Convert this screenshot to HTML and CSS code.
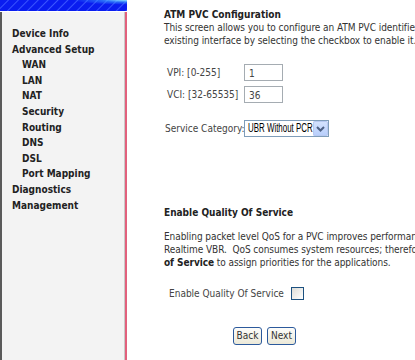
FILE: index.html
```html
<!DOCTYPE html>
<html lang="en">
<head>
    <meta charset="UTF-8">
    <title>ATM PVC Configuration</title>
    <link rel="stylesheet" href="styles.css">
</head>
<body>
<div class="page">

    <!-- Left menu frame -->
    <div class="side">
        <div class="banner"></div>
        <ul class="menu">
            <li>Device Info</li>
            <li>Advanced Setup</li>
            <li class="sub">WAN</li>
            <li class="sub">LAN</li>
            <li class="sub">NAT</li>
            <li class="sub">Security</li>
            <li class="sub">Routing</li>
            <li class="sub">DNS</li>
            <li class="sub">DSL</li>
            <li class="sub">Port Mapping</li>
            <li>Diagnostics</li>
            <li>Management</li>
        </ul>
    </div>

    <!-- Main frame -->
    <div class="main">
        <div class="title">ATM PVC Configuration</div>
        <div class="text">
            <div class="line">This screen allows you to configure an ATM PVC identifier (PVI and VCI) and select a service category. Otherwise choose an</div>
            <div class="line">existing interface by selecting the checkbox to enable it.</div>
        </div>

        <div class="field first">
            <span class="label">VPI: [0-255]</span>
            <span class="input">1</span>
        </div>
        <div class="field">
            <span class="label">VCI: [32-65535]</span>
            <span class="input">36</span>
        </div>

        <div class="field cat">
            <span class="label">Service Category:</span>
            <span class="select">
                <span class="value"><span class="squeeze">UBR Without PCR</span></span>
                <span class="arrow">
                    <svg width="15" height="15" viewBox="0 0 15 15">
                        <path d="M4 6 L7.5 9.5 L11 6" fill="none" stroke="#4d6185" stroke-width="2"/>
                    </svg>
                </span>
            </span>
        </div>

        <div class="title qos">Enable Quality Of Service</div>
        <div class="text">
            <div class="line">Enabling packet level QoS for a PVC improves performance for selected classes of applications.  QoS cannot be set for CBR and</div>
            <div class="line">Realtime VBR.&nbsp; QoS consumes system resources; therefore the number of PVCs will be reduced. Use <b>Advanced Setup/Quality</b></div>
            <div class="line"><b>of Service</b> to assign priorities for the applications.</div>
        </div>

        <div class="check-row">
            <span>Enable Quality Of Service</span>
            <span class="checkbox"></span>
        </div>

        <div class="buttons">
            <span class="btn">Back</span>
            <span class="btn">Next</span>
        </div>
    </div>

</div>
</body>
</html>
```

FILE: styles.css
```css
body {
    margin: 0;
    font-family: "DejaVu Sans Condensed", "DejaVu Sans", sans-serif;
    font-stretch: condensed;
    font-size: 10px;
    color: #333;
    background-color: #fff;
    overflow: hidden;
}

.page {
    display: flex;
    height: 360px;
}

/* Left menu */
.side {
    width: 122px;
    flex: none;
    background-color: #f3f3f3;
    border-left: 2px solid #5a5a5a;
    border-right: 1px solid #c8c8c8;
    box-shadow: 2px 0 0 #e2607c;
}

.banner {
    height: 11px;
    margin-left: -2px;
    margin-right: -3px;
    border-bottom: 1px solid #fff;
    background:
        radial-gradient(ellipse at 100% 0%, #8fe6ff 0%, rgba(60, 160, 255, 0.6) 14%, rgba(0, 0, 255, 0) 30%),
        repeating-linear-gradient(135deg, #0a1df0 0px, #0a1df0 5px, #3a55ff 6px, #0a1df0 7px);
}

.menu {
    list-style: none;
    margin: 0;
    padding: 14px 0 0 10px;
    font-weight: bold;
    color: #222;
}

.menu li {
    line-height: 15.6px;
    white-space: nowrap;
}

.menu .sub {
    padding-left: 10px;
}

/* Main area */
.main {
    flex: 1;
    min-width: 0;
    overflow: hidden;
    padding: 8px 0 0 39px;
}

.title {
    font-weight: bold;
    line-height: 13px;
    color: #222;
}

.text .line {
    line-height: 13px;
    white-space: nowrap;
    letter-spacing: -0.06px;
}

.text b {
    color: #222;
}

.field {
    display: flex;
    align-items: center;
    height: 16px;
    margin-top: 6px;
    padding-left: 3px;
    color: #444;
}

.field.first {
    margin-top: 17px;
}

.field.cat {
    margin-top: 18px;
    padding-left: 1px;
}

.label {
    width: 77px;
    flex: none;
    white-space: nowrap;
}

.field.cat .label {
    width: 79px;
}

.input {
    box-sizing: border-box;
    width: 39px;
    height: 17px;
    border: 1px solid #a5acb2;
    background-color: #fff;
    padding: 2px 0 0 4px;
    line-height: 13px;
}

.select {
    box-sizing: border-box;
    display: flex;
    align-items: center;
    width: 85px;
    height: 17px;
    border: 1px solid #7f9db9;
    background-color: #fff;
}

.select .value {
    flex: 1;
    min-width: 0;
    overflow: hidden;
    padding-left: 3px;
    white-space: nowrap;
}

.squeeze {
    display: inline-block;
    font-family: "Liberation Sans", Arial, sans-serif;
    font-size: 12px;
    color: #000;
    transform: scaleX(0.66);
    transform-origin: left center;
}

.select .arrow {
    display: block;
    flex: none;
    width: 15px;
    height: 15px;
    border-radius: 2px;
    background: linear-gradient(#d6e4fe, #b6cdfb);
    box-shadow: inset 0 0 0 1px #b7c9f2;
}

.select svg {
    display: block;
}

.title.qos {
    margin-top: 70px;
}

.title.qos + .text {
    margin-top: 11px;
}

.check-row {
    display: flex;
    align-items: center;
    margin-top: 18px;
    padding-left: 5px;
    color: #444;
}

.checkbox {
    box-sizing: border-box;
    width: 13px;
    height: 13px;
    margin-left: 7px;
    border: 1px solid #1c5180;
    background: linear-gradient(135deg, #dcdcd7, #fff);
}

.buttons {
    display: flex;
    gap: 5px;
    margin-top: 27px;
    padding-left: 69px;
}

.btn {
    box-sizing: border-box;
    width: 29px;
    height: 18px;
    border: 1px solid #2c5a9c;
    border-radius: 3px;
    background: linear-gradient(#fdfdfb, #ece9d8);
    text-align: center;
    line-height: 16px;
    color: #333;
}
```
